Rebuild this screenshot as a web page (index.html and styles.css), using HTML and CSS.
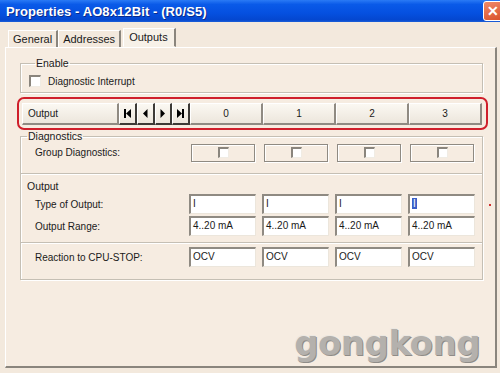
FILE: index.html
```html
<!DOCTYPE html>
<html lang="en">
<head>
    <meta charset="UTF-8">
    <title>Properties - AO8x12Bit - (R0/S5)</title>
    <link rel="stylesheet" href="styles.css">
</head>
<body>
    <div class="window">
        <div class="titlebar">
            <div class="title">Properties - AO8x12Bit - (R0/S5)</div>
            <div class="close-btn">&#10005;</div>
        </div>

        <div class="tabs">
            <div class="tab">General</div>
            <div class="tab">Addresses</div>
            <div class="tab active">Outputs</div>
        </div>

        <div class="panel">
            <fieldset class="group enable-group">
                <legend>Enable</legend>
                <label class="check-label"><span class="checkbox"></span>Diagnostic Interrupt</label>
            </fieldset>

            <div class="header-frame">
                <div class="header-row">
                    <div class="hbtn output-btn">Output</div>
                    <div class="nav-btns">
                        <div class="hbtn nav">
                            <svg width="9" height="9" viewBox="0 0 9 9"><rect x="1" y="0" width="2" height="9"/><polygon points="8,0 3,4.5 8,9"/></svg>
                        </div>
                        <div class="hbtn nav">
                            <svg width="9" height="9" viewBox="0 0 9 9"><polygon points="6.5,0 2,4.5 6.5,9"/></svg>
                        </div>
                        <div class="hbtn nav">
                            <svg width="9" height="9" viewBox="0 0 9 9"><polygon points="2.5,0 7,4.5 2.5,9"/></svg>
                        </div>
                        <div class="hbtn nav">
                            <svg width="9" height="9" viewBox="0 0 9 9"><polygon points="1,0 6,4.5 1,9"/><rect x="6" y="0" width="2" height="9"/></svg>
                        </div>
                    </div>
                    <div class="hbtn">0</div>
                    <div class="hbtn">1</div>
                    <div class="hbtn">2</div>
                    <div class="hbtn">3</div>
                </div>
            </div>

            <fieldset class="group params-group">
                <legend>Diagnostics</legend>
                <div class="grid-row diag-row">
                    <div class="row-label">Group Diagnostics:</div>
                    <div class="cell"><span class="checkbox small"></span></div>
                    <div class="cell"><span class="checkbox small"></span></div>
                    <div class="cell"><span class="checkbox small"></span></div>
                    <div class="cell"><span class="checkbox small"></span></div>
                </div>

                <div class="section">
                    <div class="section-title">Output</div>
                    <div class="grid-row">
                        <div class="row-label">Type of Output:</div>
                        <div class="field">I</div>
                        <div class="field">I</div>
                        <div class="field">I</div>
                        <div class="field focused"><span class="sel">I</span></div>
                    </div>
                    <div class="grid-row">
                        <div class="row-label">Output Range:</div>
                        <div class="field">4..20 mA</div>
                        <div class="field">4..20 mA</div>
                        <div class="field">4..20 mA</div>
                        <div class="field">4..20 mA</div>
                    </div>
                </div>

                <div class="section last">
                    <div class="grid-row">
                        <div class="row-label">Reaction to CPU-STOP:</div>
                        <div class="field">OCV</div>
                        <div class="field">OCV</div>
                        <div class="field">OCV</div>
                        <div class="field">OCV</div>
                    </div>
                </div>
            </fieldset>

            <span class="red-dot"></span>
            <div class="watermark">gongkong</div>
        </div>
    </div>
</body>
</html>
```

FILE: styles.css
```css
:root {
    --face: #f3e9dd;
    --text: #1a1a1a;
    --red: #cf1f2b;
    --line: #c5bfb4;
    --edge: #8f8a82;
}

* {
    margin: 0;
    padding: 0;
    box-sizing: border-box;
}

body {
    width: 500px;
    height: 373px;
    overflow: hidden;
    font-family: "Liberation Sans", Arial, sans-serif;
    font-size: 10px;
    color: var(--text);
    background: var(--face);
}

.window {
    height: 373px;
    display: flex;
    flex-direction: column;
}

.titlebar {
    height: 22px;
    display: flex;
    align-items: center;
    padding-left: 6px;
    background: linear-gradient(180deg, #2a7af5 0%, #0a5ae8 20%, #0550e0 60%, #0447cf 90%, #1d5fd8 100%);
}

.title {
    color: #fff;
    font-weight: bold;
    font-size: 13px;
    letter-spacing: 0.1px;
    text-shadow: 1px 1px 0 #0a2a8a;
}

.close-btn {
    margin-left: auto;
    width: 20px;
    height: 20px;
    margin-right: -3px;
    border: 1px solid #fff;
    border-radius: 3px;
    background: linear-gradient(160deg, #f08a6a, #d9502a);
    color: #fff;
    font-size: 14px;
    font-weight: bold;
    line-height: 18px;
    text-align: center;
}

.tabs {
    display: flex;
    align-items: flex-end;
    margin-top: 7px;
    padding-left: 8px;
    height: 18px;
    position: relative;
    z-index: 1;
    font-size: 11px;
}

.tab {
    height: 17px;
    line-height: 16px;
    padding: 0 4px;
    border-right: 2px solid #8a857d;
    border-left: 1px solid #fff;
    border-top: 1px solid #fff;
    background: var(--face);
}

.tab.active {
    height: 19px;
    padding: 0 6px 0 5px;
    margin-left: 2px;
    line-height: 17px;
    background: #f7f1e8;
    border-bottom: 1px solid #f7f1e8;
}

.panel {
    position: relative;
    margin: 0 3px 5px 5px;
    flex: 1;
    border-top: 1px solid #fff;
    border-left: 1px solid #fff;
    border-right: 2px solid #8a857d;
    border-bottom: 2px solid #8a857d;
    background: #f6ece1;
    padding: 9px 0 0 14px;
}

.group {
    width: 463px;
    border: 1px solid var(--line);
    box-shadow: inset 1px 1px 0 #fff, 1px 1px 0 #fff;
}

.group legend {
    margin-left: 6px;
    padding: 0 1px;
    line-height: 12px;
    font-size: 10.5px;
}

.enable-group {
    height: 36px;
    padding: 6px 0 0 8px;
}

.check-label {
    display: flex;
    align-items: center;
    gap: 7px;
}

.checkbox {
    display: inline-block;
    width: 12px;
    height: 12px;
    background: #fff;
    border-top: 2px solid #8a857d;
    border-left: 2px solid #8a857d;
    border-right: 1px solid #f0ece4;
    border-bottom: 1px solid #f0ece4;
}

.checkbox.small {
    width: 11px;
    height: 11px;
}

.header-frame {
    width: 471px;
    height: 33px;
    margin: 4px 0 0 -3px;
    border: 2px solid var(--red);
    border-radius: 7px;
    padding: 4px 0 0 3px;
}

.header-row {
    display: grid;
    grid-template-columns: 97px 71px repeat(4, 73px);
    height: 22px;
}

.hbtn {
    display: flex;
    align-items: center;
    justify-content: center;
    background: linear-gradient(180deg, #fbf8f2, #ece6dc);
    border-top: 1px solid #fff;
    border-left: 1px solid #fff;
    border-right: 2px solid var(--edge);
    border-bottom: 2px solid var(--edge);
}

.output-btn {
    justify-content: flex-start;
    padding-left: 5px;
}

.nav-btns {
    display: grid;
    grid-template-columns: repeat(4, 1fr);
}

.hbtn.nav {
    border-right: 2px solid #3d3a36;
    border-bottom: 2px solid #3d3a36;
}

.hbtn.nav svg {
    fill: #000;
}

.params-group {
    padding: 0;
}

.grid-row {
    display: grid;
    grid-template-columns: 167px repeat(4, 73px);
    align-items: center;
    height: 22px;
}

.row-label {
    padding-left: 14px;
}

.diag-row {
    padding-bottom: 10px;
    height: 31px;
}

.cell {
    height: 18px;
    margin-right: 6px;
    margin-left: 3px;
    border: 1px solid var(--edge);
    box-shadow: inset 1px 1px 0 #fff, 1px 1px 0 #fff;
    display: flex;
    align-items: center;
    justify-content: center;
}

.section {
    border-top: 1px solid var(--line);
    box-shadow: inset 0 1px 0 #fff;
    padding-top: 5px;
    padding-bottom: 5px;
}

.section-title {
    padding-left: 6px;
    height: 14px;
    line-height: 14px;
    font-size: 10.5px;
}

.section.last {
    padding-top: 3px;
    padding-bottom: 11px;
}

.field {
    height: 20px;
    margin-right: 5px;
    margin-left: 1px;
    background: #fff;
    border-top: 2px solid var(--edge);
    border-left: 2px solid var(--edge);
    border-right: 1px solid #ece6dc;
    border-bottom: 1px solid #ece6dc;
    padding-left: 2px;
    line-height: 16px;
    white-space: nowrap;
}

.field.focused .sel {
    background: #3a5fc8;
    color: #fff;
    padding: 0 1px;
}

.red-dot {
    position: absolute;
    right: 4px;
    top: 156px;
    width: 2px;
    height: 2px;
    background: #d03030;
}

.watermark {
    position: absolute;
    right: 15px;
    bottom: 3px;
    font-family: "DejaVu Sans", sans-serif;
    font-weight: bold;
    font-size: 34px;
    letter-spacing: -0.5px;
    color: #b4b1ad;
    text-shadow: 1px 1px 0 #8f8c88, -1px -1px 0 #ece8e2;
}
```
